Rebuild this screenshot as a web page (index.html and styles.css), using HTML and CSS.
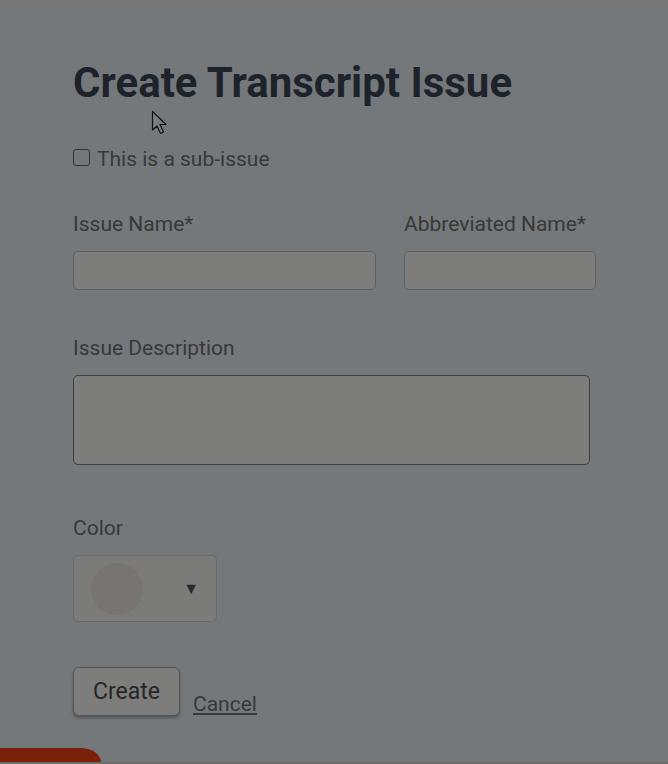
FILE: index.html
```html
<!DOCTYPE html>
<html lang="en">
<head>
    <meta charset="UTF-8">
    <meta name="viewport" content="width=device-width, initial-scale=1.0">
    <title>Create Transcript Issue</title>
    <link rel="stylesheet" href="styles.css">
</head>
<body>
    <div class="page">
        <form class="issue-form">
            <h1>Create Transcript Issue</h1>
            <label class="check-row">
                <span class="check-box"></span>
                This is a sub-issue
            </label>

            <div class="name-row">
                <div class="field field-name">
                    <label for="issueName">Issue Name*</label>
                    <div class="text-input" id="issueName"></div>
                </div>
                <div class="field field-abbr">
                    <label for="abbrName">Abbreviated Name*</label>
                    <div class="text-input" id="abbrName"></div>
                </div>
            </div>

            <div class="field field-desc">
                <label for="issueDesc">Issue Description</label>
                <div class="text-area" id="issueDesc"></div>
            </div>

            <div class="field field-color">
                <label>Color</label>
                <div class="color-picker">
                    <span class="swatch"></span>
                    <span class="caret">&#9660;</span>
                </div>
            </div>

            <div class="actions">
                <span class="btn-create">Create</span>
                <a class="cancel-link" href="#">Cancel</a>
            </div>
        </form>

        <div class="corner-tab"></div>

        <svg class="cursor" width="20" height="28" viewBox="0 0 20 28">
            <path d="M1.5 1.5 L1.5 20 L6 16 L9.5 23.5 L12.5 22 L9 14.5 L15 14.5 Z" fill="#7a7e80" stroke="#111" stroke-width="1.2" stroke-linejoin="round"/>
        </svg>
    </div>
</body>
</html>
```

FILE: styles.css
```css
body {
    margin: 0;
    background-color: #74787b;
    font-family: Roboto, "Liberation Sans", sans-serif;
    color: #383838;
}

.page {
    position: relative;
    height: 764px;
    box-sizing: border-box;
    border-top: 2px solid #7a7774;
    border-bottom: 2px solid #6c6c6c;
    overflow: hidden;
}

.issue-form {
    padding: 60px 0 0 73px;
}

h1 {
    margin: 0;
    font-size: 42px;
    line-height: 42px;
    font-weight: 700;
    color: #1e232b;
}

.check-row {
    display: flex;
    align-items: center;
    gap: 7px;
    margin-top: 43px;
    font-size: 21px;
}

.check-box {
    width: 15px;
    height: 15px;
    margin-top: -3px;
    border: 1.5px solid #333;
    border-radius: 3px;
}

.name-row {
    display: flex;
    gap: 28px;
    margin-top: 41px;
}

.field label {
    display: block;
    font-size: 21px;
    line-height: 24px;
    margin-bottom: 15px;
}

.text-input {
    box-sizing: border-box;
    height: 39px;
    background-color: #7d7d7b;
    border: 1px solid #606060;
    border-radius: 5px;
}

.field-name .text-input {
    width: 303px;
}

.field-abbr .text-input {
    width: 192px;
}

.field-desc {
    margin-top: 46px;
}

.text-area {
    box-sizing: border-box;
    width: 517px;
    height: 90px;
    background-color: #7d7d7b;
    border: 1px solid #3f3f3f;
    border-radius: 5px;
}

.field-color {
    margin-top: 51px;
}

.color-picker {
    box-sizing: border-box;
    display: flex;
    align-items: center;
    justify-content: space-between;
    width: 144px;
    height: 67px;
    padding: 0 17px 0 17px;
    background-color: #7b7b79;
    border: 1px solid #6a6a6a;
    border-radius: 5px;
}

.swatch {
    width: 52px;
    height: 52px;
    border-radius: 50%;
    background-color: #797474;
}

.caret {
    font-size: 16px;
    color: #2a2a2a;
}

.actions {
    display: flex;
    align-items: flex-end;
    gap: 13px;
    margin-top: 45px;
}

.btn-create {
    box-sizing: border-box;
    width: 107px;
    height: 49px;
    display: flex;
    align-items: center;
    justify-content: center;
    font-size: 23px;
    color: #262626;
    background-color: #7d7d7b;
    border: 1px solid #555;
    border-radius: 6px;
    box-shadow: 0 2px 3px rgba(0, 0, 0, 0.3);
}

.cancel-link {
    font-size: 21px;
    color: #383838;
    margin-bottom: 0;
}

.corner-tab {
    position: absolute;
    left: 0;
    bottom: 0;
    width: 101px;
    height: 14px;
    background-color: #7a2008;
    border-top-right-radius: 30px 20px;
}

.cursor {
    position: absolute;
    left: 151px;
    top: 108px;
}
```
